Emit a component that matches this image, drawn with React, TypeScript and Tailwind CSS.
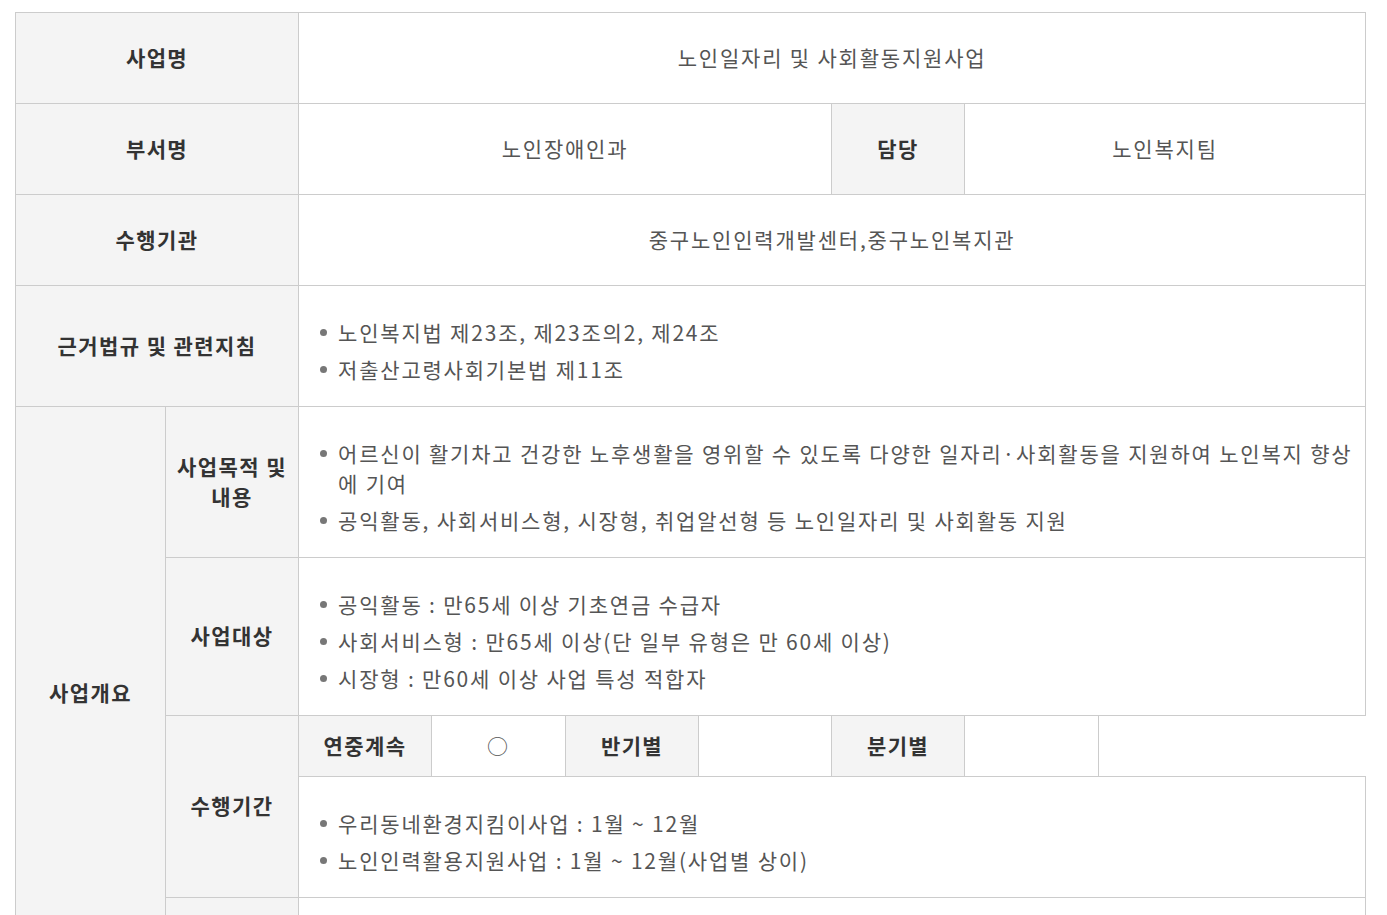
import React from 'react';

const th = 'border border-[#cccccc] bg-[#f4f4f4] text-center align-middle font-bold tracking-[1.4px] text-[#333333] leading-[30px] px-[8px] pb-[3px]';
const td = 'border border-[#cccccc] bg-white text-center align-middle text-[#555555] leading-[30px] px-[10px] pb-[3px]';
const tdList = 'border border-[#cccccc] bg-white text-left align-top text-[#555555] leading-[30px] pl-[20px] pr-[10px] pt-[24px] pb-[13px] break-all';

const BulletList: React.FC<{ items: string[] }> = ({ items }) => (
  <ul>
    {items.map((item, i) => (
      <li key={i} className="relative mt-[7px] pl-[19px]">
        <span className="absolute left-[1px] top-[12px] h-[7px] w-[7px] rounded-full bg-[#777777]" />
        {item}
      </li>
    ))}
  </ul>
);

const App: React.FC = () => {
  return (
    <div
      className="bg-white pt-[12px] pl-[15px] text-[21px] tracking-[1.8px]"
      style={{ fontFamily: '"Noto Sans CJK KR", "Noto Sans", sans-serif' }}
    >
      <table className="w-[1350px] table-fixed border-collapse">
        <colgroup>
          <col className="w-[150px]" />
          <col className="w-[133px]" />
          <col className="w-[133px]" />
          <col className="w-[134px]" />
          <col className="w-[133px]" />
          <col className="w-[133px]" />
          <col className="w-[133px]" />
          <col className="w-[134px]" />
          <col className="w-[133px]" />
          <col className="w-[134px]" />
        </colgroup>
        <tbody>
          <tr className="h-[91px]">
            <th colSpan={2} className={th}>사업명</th>
            <td colSpan={8} className={td}>노인일자리 및 사회활동지원사업</td>
          </tr>
          <tr className="h-[91px]">
            <th colSpan={2} className={th}>부서명</th>
            <td colSpan={4} className={td}>노인장애인과</td>
            <th className={th}>담당</th>
            <td colSpan={3} className={td}>노인복지팀</td>
          </tr>
          <tr className="h-[91px]">
            <th colSpan={2} className={th}>수행기관</th>
            <td colSpan={8} className={td}>중구노인인력개발센터,중구노인복지관</td>
          </tr>
          <tr className="h-[121px]">
            <th colSpan={2} className={th}>근거법규 및 관련지침</th>
            <td colSpan={8} className={tdList}>
              <BulletList items={['노인복지법 제23조, 제23조의2, 제24조', '저출산고령사회기본법 제11조']} />
            </td>
          </tr>
          <tr className="h-[151px]">
            <th rowSpan={6} className={th}>사업개요</th>
            <th className={th}>사업목적 및 내용</th>
            <td colSpan={8} className={tdList}>
              <BulletList
                items={[
                  '어르신이 활기차고 건강한 노후생활을 영위할 수 있도록 다양한 일자리·사회활동을 지원하여 노인복지 향상에 기여',
                  '공익활동, 사회서비스형, 시장형, 취업알선형 등 노인일자리 및 사회활동 지원',
                ]}
              />
            </td>
          </tr>
          <tr className="h-[158px]">
            <th className={th}>사업대상</th>
            <td colSpan={8} className={tdList}>
              <BulletList
                items={[
                  '공익활동 : 만65세 이상 기초연금 수급자',
                  '사회서비스형 : 만65세 이상(단 일부 유형은 만 60세 이상)',
                  '시장형 : 만60세 이상 사업 특성 적합자',
                ]}
              />
            </td>
          </tr>
          <tr className="h-[61px]">
            <th rowSpan={2} className={th}>수행기간</th>
            <th className={th}>연중계속</th>
            <td className={td}>○</td>
            <th className={th}>반기별</th>
            <td className={td}></td>
            <th className={th}>분기별</th>
            <td className={td}></td>
          </tr>
          <tr className="h-[121px]">
            <td colSpan={8} className={tdList}>
              <BulletList items={['우리동네환경지킴이사업 : 1월 ~ 12월', '노인인력활용지원사업 : 1월 ~ 12월(사업별 상이)']} />
            </td>
          </tr>
          <tr className="h-[83px]">
            <th className={th}></th>
            <td colSpan={8} className={td}></td>
          </tr>
        </tbody>
      </table>
    </div>
  );
};

export default App;
